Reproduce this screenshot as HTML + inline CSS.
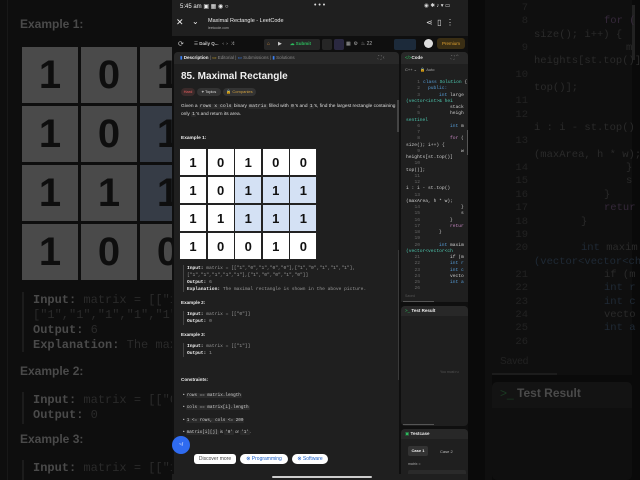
<!DOCTYPE html>
<html><head><meta charset="utf-8"><style>
*{margin:0;padding:0;box-sizing:border-box}
body{width:640px;height:480px;overflow:hidden;background:#0d0d0d;font-family:"Liberation Sans",sans-serif;position:relative;color:#ddd}
.a{position:absolute;white-space:nowrap}
.m{font-family:"Liberation Mono",monospace}
.bg{position:absolute;top:0;height:480px;overflow:hidden}
.bc{position:absolute;background:#4a4a4a;border:2px solid #0e0e0e;color:#0e0e0e;font-weight:bold;font-size:40px;display:flex;align-items:center;justify-content:center}
.gc{position:absolute;width:28px;height:28px;background:#fff;border:1px solid #222;color:#111;font-weight:bold;font-size:13px;display:flex;align-items:center;justify-content:center}
.gc.b{background:#d4e1f4}
.cd{font-size:4.6px;color:#9cdcfe}
.ln{font-size:4.6px;color:#666}
.code{background:#2a2a2a;border-radius:1px;padding:0 1px}
</style></head><body>
<!-- left bg -->
<div class="bg" style="left:0;width:172px;background:#0e0e0e">
<div class="a" style="left:7px;top:0;width:1px;height:480px;background:#181818"></div>
<div class="a" style="left:20px;top:17px;font-size:12px;font-weight:bold;color:#4a4a4a">Example 1:</div>
<div class="bc" style="left:20px;top:45px;width:60px;height:60px">1</div>
<div class="bc" style="left:79px;top:45px;width:60px;height:60px">0</div>
<div class="bc" style="left:138px;top:45px;width:60px;height:60px">1</div>
<div class="bc" style="left:20px;top:104px;width:60px;height:60px">1</div>
<div class="bc" style="left:79px;top:104px;width:60px;height:60px">0</div>
<div class="bc" style="left:138px;top:104px;width:60px;height:60px;background:#363c46">1</div>
<div class="bc" style="left:20px;top:163px;width:60px;height:60px">1</div>
<div class="bc" style="left:79px;top:163px;width:60px;height:60px">1</div>
<div class="bc" style="left:138px;top:163px;width:60px;height:60px;background:#363c46">1</div>
<div class="bc" style="left:20px;top:222px;width:60px;height:60px">1</div>
<div class="bc" style="left:79px;top:222px;width:60px;height:60px">0</div>
<div class="bc" style="left:138px;top:222px;width:60px;height:60px">0</div>
<div class="a" style="left:22px;top:292px;width:2px;height:60px;background:#1c1c1c"></div>
<div class="a m" style="left:33px;top:293px;font-size:12px;line-height:15px;color:#2a2a2a"><b style="color:#4a4a4a">Input:</b> matrix = [["1",<br>["1","1","1","1","1"],<br><b style="color:#4a4a4a">Output:</b> 6<br><b style="color:#4a4a4a">Explanation:</b> The maxim</div>
<div class="a" style="left:20px;top:364px;font-size:12px;font-weight:bold;color:#4a4a4a">Example 2:</div>
<div class="a" style="left:22px;top:392px;width:2px;height:32px;background:#1c1c1c"></div>
<div class="a m" style="left:33px;top:393px;font-size:12px;line-height:15px;color:#2a2a2a"><b style="color:#4a4a4a">Input:</b> matrix = [["0"]<br><b style="color:#4a4a4a">Output:</b> 0</div>
<div class="a" style="left:20px;top:432px;font-size:12px;font-weight:bold;color:#4a4a4a">Example 3:</div>
<div class="a" style="left:22px;top:460px;width:2px;height:30px;background:#1c1c1c"></div>
<div class="a m" style="left:33px;top:461px;font-size:12px;line-height:15px;color:#2a2a2a"><b style="color:#4a4a4a">Input:</b> matrix = [["1"]</div>
</div>
<!-- right bg -->
<div class="bg" style="left:468px;width:172px;background:#0a0a0a">
<div class="a" style="left:17px;top:0;width:7px;height:480px;background:#0f0f0f"></div>
<div class="a" style="left:24px;top:0;width:140px;height:375px;background:#0f0f0f"></div>
<div class="a" style="left:164px;top:5px;width:3px;height:55px;background:#222"></div>
<div class="a m" style="left:0px;top:2px;font-size:10.5px;line-height:13.35px;color:#222;width:60px;text-align:right">7<br>8<br><br>9<br><br>10<br><br>11<br>12<br><br>13<br><br>14<br>15<br>16<br>17<br>18<br>19<br>20<br><br>21<br>22<br>23<br>24<br>25<br>26</div>
<div class="a m" style="left:66px;top:2px;font-size:10.5px;line-height:13.35px;color:#2a2a2a"><br><span style="margin-left:70px;color:#35283a">for (</span><br>size(); i++) {<br><span style="margin-left:92px">m</span><br>heights[st.top()]<br><br>top()];<br><br><br>i : i - st.top()<br><br>(maxArea, h * w);<br><span style="margin-left:92px">}</span><br><span style="margin-left:92px">s</span><br><span style="margin-left:70px">}</span><br><span style="margin-left:70px;color:#35283a">retur</span><br><span style="margin-left:47px">}</span><br><br><span style="margin-left:47px"><span style="color:#1f2a36">int</span> maxim</span><br><span style="color:#1f2a36">(vector&lt;vector&lt;ch</span><br><span style="margin-left:70px">if (m</span><br><span style="margin-left:70px;color:#1f2a36">int r</span><br><span style="margin-left:70px;color:#1f2a36">int c</span><br><span style="margin-left:70px">vecto</span><br><span style="margin-left:70px;color:#1f2a36">int a</span></div>
<div class="a" style="left:32px;top:356px;font-size:10px;color:#222">Saved</div>
<div class="a" style="left:24px;top:373px;width:65px;height:2px;background:#1c1c1c"></div>
<div class="a" style="left:24px;top:382px;width:140px;height:98px;background:#0f0f0f;border-radius:5px"></div>
<div class="a" style="left:24px;top:382px;width:140px;height:26px;background:#131313;border-radius:5px 5px 0 0"></div>
<div class="a" style="left:32px;top:386px;font-size:12px;color:#4a4a4a"><span style="color:#1a3a22">&gt;_</span> <b>Test Result</b></div>
</div>
<!-- phone -->
<div class="a" style="left:172px;top:0;width:296px;height:480px;background:#0f0f0f;overflow:hidden">
<div class="a" style="left:0;top:0;width:296px;height:36px;background:#1f1f1f"></div>
<div class="a" style="left:8px;top:3px;font-size:6px;color:#eee">5:45 am ▣ ▦ ◉ ○</div>
<div class="a" style="left:142px;top:2px;font-size:7px;color:#ddd">• • •</div>
<div class="a" style="left:252px;top:3px;font-size:5.5px;color:#ddd">◉ ✱ ♪ ▾ ▭</div>
<div class="a" style="left:4px;top:17px;font-size:9px;color:#eee">✕</div>
<div class="a" style="left:20px;top:17px;font-size:8px;color:#eee">⌄</div>
<div class="a" style="left:36px;top:18px;font-size:5.5px;color:#eee">Maximal Rectangle - LeetCode</div>
<div class="a" style="left:36px;top:26px;font-size:3.5px;color:#aaa">leetcode.com</div>
<div class="a" style="left:254px;top:18px;font-size:8px;color:#ddd">⋖ &nbsp;▯ &nbsp;⋮</div>
<div class="a" style="left:6px;top:40px;font-size:7px;color:#ccc">⟳</div>
<div class="a" style="left:22px;top:41px;font-size:4.5px;color:#ccc">☰ <b>Daily Q...</b> &nbsp; ‹ &nbsp;› &nbsp;⤨</div>
<div class="a" style="left:92px;top:39px;width:56px;height:11px;background:#262626;border-radius:2px"></div>
<div class="a" style="left:95px;top:41px;font-size:5px;color:#d08a3a">⌂</div>
<div class="a" style="left:106px;top:41px;font-size:5px;color:#ccc">▶</div>
<div class="a" style="left:118px;top:41px;font-size:4.5px;color:#2cbb5d;font-weight:bold">☁ Submit</div>
<div class="a" style="left:150px;top:39px;width:10px;height:11px;background:#262626;border-radius:2px"></div>
<div class="a" style="left:162px;top:39px;width:10px;height:11px;background:#2a2840;border-radius:2px"></div>
<div class="a" style="left:174px;top:41px;font-size:5px;color:#aaa">▦ &nbsp;⚙ &nbsp;♨ 22</div>
<div class="a" style="left:222px;top:39px;width:22px;height:11px;background:#1c2a3a;border-radius:2px"></div>
<div class="a" style="left:252px;top:39px;width:9px;height:9px;background:#ddd;border-radius:50%"></div>
<div class="a" style="left:265px;top:38px;width:28px;height:11px;background:#3a2e14;border-radius:3px;font-size:4.5px;color:#e0a030;text-align:center;line-height:11px">Premium</div>
<div class="a" style="left:2px;top:52px;width:225px;height:428px;background:#1f1f1f;border-radius:4px 4px 0 0"></div>
<div class="a" style="left:2px;top:52px;width:225px;height:12px;background:#282828;border-radius:4px 4px 0 0"></div>
<div class="a" style="left:8px;top:55px;font-size:4.5px;color:#888"><span style="color:#3b82f6">▮</span> <b style="color:#eee">Description</b> | <span style="color:#c9a227">▭</span> Editorial | <span style="color:#3b82f6">▭</span> Submissions | <span style="color:#3b82f6">▮</span> Solutions</div>
<div class="a" style="left:206px;top:55px;font-size:5px;color:#888">⛶ ‹</div>
<div class="a" style="left:9px;top:71px;font-size:10px;font-weight:bold;color:#f0f0f0">85. Maximal Rectangle</div>
<div class="a" style="left:9px;top:88px;width:14px;height:8px;background:#3a2a2a;border-radius:4px;font-size:4px;color:#f06060;text-align:center;line-height:8px">Hard</div>
<div class="a" style="left:25px;top:88px;width:24px;height:8px;background:#333;border-radius:4px;font-size:4px;color:#ddd;text-align:center;line-height:8px">⌖ Topics</div>
<div class="a" style="left:51px;top:88px;width:33px;height:8px;background:#333;border-radius:4px;font-size:4px;color:#d0a040;text-align:center;line-height:8px">🔒 Companies</div>
<div class="a" style="left:9px;top:103px;font-size:4.8px;line-height:7.5px;color:#ddd">Given a <span class="code m">rows x cols</span> binary <span class="code m">matrix</span> filled with <span class="code m">0</span>'s and <span class="code m">1</span>'s, find the largest rectangle containing<br>only <span class="code m">1</span>'s and return its area.</div>
<div class="a" style="left:9px;top:136px;font-size:4.8px;font-weight:bold;color:#eee">Example 1:</div>
<div class="gc" style="left:7px;top:148px">1</div><div class="gc" style="left:34.6px;top:148px">0</div><div class="gc" style="left:62.2px;top:148px">1</div><div class="gc" style="left:89.8px;top:148px">0</div><div class="gc" style="left:117.4px;top:148px">0</div>
<div class="gc" style="left:7px;top:176px">1</div><div class="gc" style="left:34.6px;top:176px">0</div><div class="gc b" style="left:62.2px;top:176px">1</div><div class="gc b" style="left:89.8px;top:176px">1</div><div class="gc b" style="left:117.4px;top:176px">1</div>
<div class="gc" style="left:7px;top:204px">1</div><div class="gc" style="left:34.6px;top:204px">1</div><div class="gc b" style="left:62.2px;top:204px">1</div><div class="gc b" style="left:89.8px;top:204px">1</div><div class="gc b" style="left:117.4px;top:204px">1</div>
<div class="gc" style="left:7px;top:232px">1</div><div class="gc" style="left:34.6px;top:232px">0</div><div class="gc" style="left:62.2px;top:232px">0</div><div class="gc" style="left:89.8px;top:232px">1</div><div class="gc" style="left:117.4px;top:232px">0</div>
<div class="a" style="left:11px;top:265px;width:1px;height:27px;background:#444"></div>
<div class="a m" style="left:15px;top:265px;font-size:4.6px;line-height:7px;color:#999"><b style="color:#eee">Input:</b> matrix = [["1","0","1","0","0"],["1","0","1","1","1"],<br>["1","1","1","1","1"],["1","0","0","1","0"]]<br><b style="color:#eee">Output:</b> 6<br><b style="color:#eee">Explanation:</b> The maximal rectangle is shown in the above picture.</div>
<div class="a" style="left:9px;top:300px;font-size:4.6px;font-weight:bold;color:#eee">Example 2:</div>
<div class="a" style="left:11px;top:311px;width:1px;height:14px;background:#444"></div>
<div class="a m" style="left:15px;top:311px;font-size:4.6px;line-height:7px;color:#999"><b style="color:#eee">Input:</b> matrix = [["0"]]<br><b style="color:#eee">Output:</b> 0</div>
<div class="a" style="left:9px;top:332px;font-size:4.6px;font-weight:bold;color:#eee">Example 3:</div>
<div class="a" style="left:11px;top:343px;width:1px;height:14px;background:#444"></div>
<div class="a m" style="left:15px;top:343px;font-size:4.6px;line-height:7px;color:#999"><b style="color:#eee">Input:</b> matrix = [["1"]]<br><b style="color:#eee">Output:</b> 1</div>
<div class="a" style="left:9px;top:377px;font-size:4.6px;font-weight:bold;color:#eee">Constraints:</div>
<div class="a" style="left:11px;top:389px;font-size:4.3px;line-height:11.4px;color:#ccc">• <span class="code m">rows == matrix.length</span><br>• <span class="code m">cols == matrix[i].length</span><br>• <span class="code m">1 &lt;= rows, cols &lt;= 200</span><br>• <span class="code m">matrix[i][j]</span> is <span class="code m">'0'</span> or <span class="code m">'1'</span>.</div>
<div class="a" style="left:0px;top:436px;width:18px;height:18px;background:#2f6bf0;border-radius:50%;font-size:5px;color:#fff;text-align:center;line-height:18px">~/</div>
<div class="a" style="left:22px;top:454px;width:42px;height:10px;background:#fff;border-radius:3px;font-size:5px;color:#444;text-align:center;line-height:10px">Discover more</div>
<div class="a" style="left:68px;top:454px;width:48px;height:10px;background:#fff;border-radius:5px;font-size:5px;color:#1a5fc8;text-align:center;line-height:10px">⊗ Programming</div>
<div class="a" style="left:120px;top:454px;width:36px;height:10px;background:#fff;border-radius:5px;font-size:5px;color:#1a5fc8;text-align:center;line-height:10px">⊗ Software</div>
<div class="a" style="left:225px;top:100px;width:2px;height:32px;background:#444"></div>
<div class="a" style="left:226px;top:250px;width:1px;height:130px;background:#3a3a3a"></div>
<div class="a" style="left:229px;top:52px;width:67px;height:250px;background:#1f1f1f;border-radius:4px 4px 0 0"></div>
<div class="a" style="left:229px;top:52px;width:67px;height:12px;background:#282828;border-radius:4px 4px 0 0"></div>
<div class="a" style="left:233px;top:55px;font-size:4.5px;color:#eee"><span style="color:#2cbb5d">&lt;/&gt;</span><b>Code</b></div>
<div class="a" style="left:279px;top:55px;font-size:5px;color:#888">⛶ ⌃</div>
<div class="a" style="left:233px;top:67px;font-size:4px;color:#aaa">C++ ⌄ &nbsp; 🔒 Auto</div>
<div class="a m ln" style="left:240px;top:80px;line-height:6.25px;text-align:right;width:8px">1<br>2<br>3<br><br>4<br>5<br><br>6<br>7<br>8<br><br>9<br><br>10<br><br>11<br>12<br><br>13<br><br>14<br>15<br>16<br>17<br>18<br>19<br>20<br><br>21<br>22<br>23<br>24<br>25<br>26</div>
<div class="a m cd" style="left:234px;top:80px;line-height:6.25px;color:#ccc"><span style="margin-left:17px;color:#569cd6">class</span> <span style="color:#4ec9b0">Solution</span> {<br><span style="margin-left:22px;color:#569cd6">public:</span><br><span style="margin-left:33px;color:#569cd6">int</span> large<br><span style="color:#4ec9b0">(vector&lt;int&gt;&amp; hei</span><br><span style="margin-left:44px">stack</span><br><span style="margin-left:44px">heigh</span><br><span style="color:#4ec9b0">sentinel</span><br><span style="margin-left:44px;color:#569cd6">int</span> m<br><br><span style="margin-left:44px;color:#c586c0">for</span> (<br>size(); i++) {<br><span style="margin-left:55px">w</span><br>heights[st.top()]<br><br>top()];<br><br><br>i : i - st.top()<br><br>(maxArea, h * w);<br><span style="margin-left:55px">}</span><br><span style="margin-left:55px">s</span><br><span style="margin-left:44px">}</span><br><span style="margin-left:44px;color:#c586c0">retur</span><br><span style="margin-left:33px">}</span><br><br><span style="margin-left:33px"><span style="color:#569cd6">int</span> maxim</span><br><span style="color:#4ec9b0">(vector&lt;vector&lt;ch</span><br><span style="margin-left:44px">if (m</span><br><span style="margin-left:44px;color:#569cd6">int r</span><br><span style="margin-left:44px;color:#569cd6">int c</span><br><span style="margin-left:44px">vecto</span><br><span style="margin-left:44px;color:#569cd6">int a</span></div>
<div class="a" style="left:295px;top:130px;width:2px;height:25px;background:#555"></div>
<div class="a" style="left:233px;top:294px;font-size:3.5px;color:#555">Saved</div>
<div class="a" style="left:231px;top:301px;width:31px;height:1px;background:#555"></div>
<div class="a" style="left:229px;top:306px;width:67px;height:120px;background:#1f1f1f;border-radius:4px"></div>
<div class="a" style="left:229px;top:306px;width:67px;height:10px;background:#282828;border-radius:4px 4px 0 0"></div>
<div class="a" style="left:233px;top:308px;font-size:4.5px;color:#eee"><span style="color:#2cbb5d">&gt;_</span> <b>Test Result</b></div>
<div class="a" style="left:268px;top:370px;font-size:3.5px;color:#555">You must ru</div>
<div class="a" style="left:231px;top:424px;width:31px;height:1px;background:#555"></div>
<div class="a" style="left:229px;top:429px;width:67px;height:51px;background:#1f1f1f;border-radius:4px"></div>
<div class="a" style="left:229px;top:429px;width:67px;height:10px;background:#282828;border-radius:4px 4px 0 0"></div>
<div class="a" style="left:233px;top:431px;font-size:4.5px;color:#eee"><span style="color:#2cbb5d">▣</span> <b>Testcase</b></div>
<div class="a" style="left:236px;top:446px;width:20px;height:10px;background:#333;border-radius:2px;font-size:4px;color:#eee;text-align:center;line-height:10px"><b>Case 1</b></div>
<div class="a" style="left:268px;top:449px;font-size:4px;color:#bbb">Case 2</div>
<div class="a" style="left:236px;top:462px;font-size:3.5px;color:#aaa">matrix =</div>
<div class="a" style="left:236px;top:470px;width:58px;height:10px;background:#2a2a2a;border-radius:2px"></div>
<div class="a" style="left:0;top:474px;width:296px;height:6px;background:#1f1f1f"></div>
<div class="a" style="left:100px;top:476px;width:100px;height:2px;background:#ccc;border-radius:1px"></div>
</div>
</body></html>
